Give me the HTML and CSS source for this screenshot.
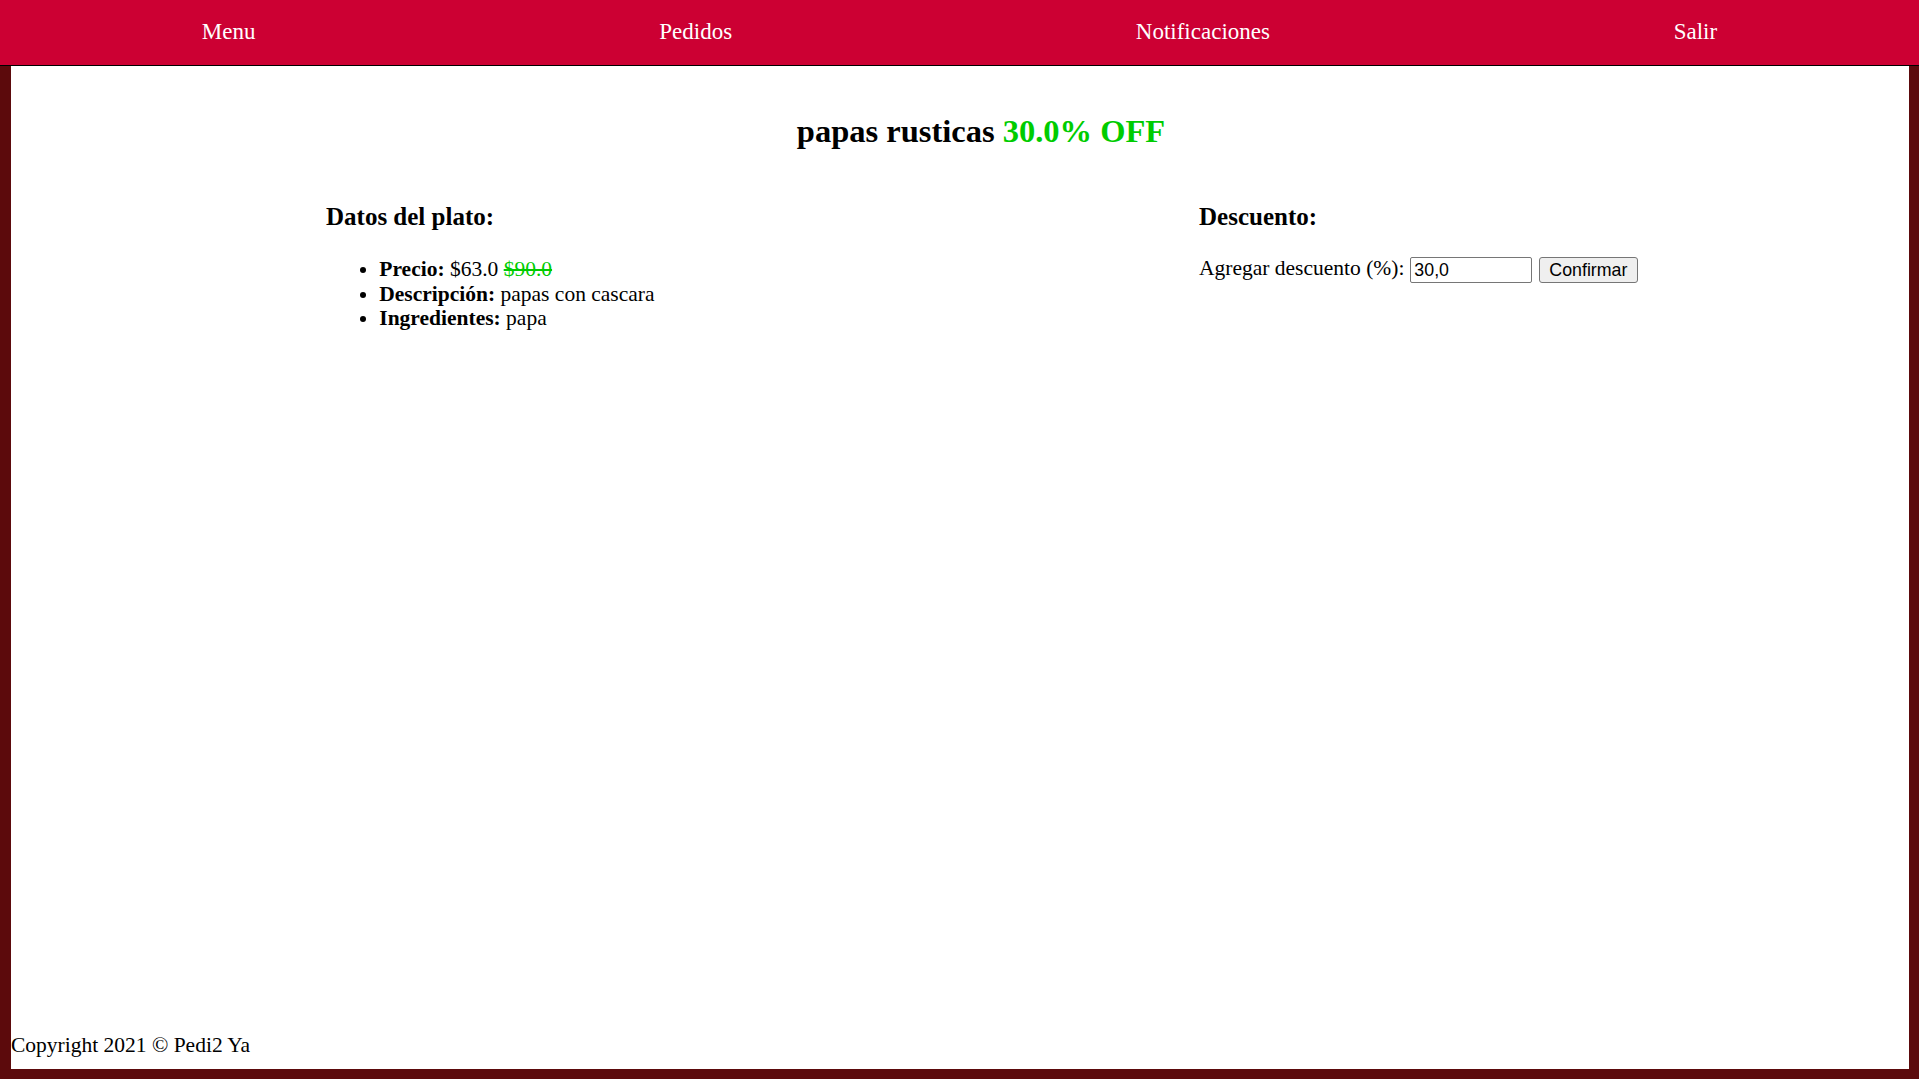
FILE: index.html
```html
<!DOCTYPE html>
<html lang="es">
<head>
<meta charset="utf-8">
<title>Pedi2 Ya</title>
<link rel="stylesheet" href="styles.css">
</head>
<body>
<nav class="navbar">
  <a class="nav-link" href="#">Menu</a>
  <a class="nav-link" href="#">Pedidos</a>
  <a class="nav-link" href="#">Notificaciones</a>
  <a class="nav-link" href="#">Salir</a>
</nav>
<main class="page">
  <section class="dish">
    <h2 class="dish-title">papas rusticas <span class="off">30.0% OFF</span></h2>
    <div class="columns">
      <div class="col">
        <h3 class="col-title">Datos del plato:</h3>
        <ul class="details">
          <li><b>Precio:</b> $63.0 <span class="old-price">$90.0</span></li>
          <li><b>Descripción:</b> papas con cascara</li>
          <li><b>Ingredientes:</b> papa</li>
        </ul>
      </div>
      <div class="col">
        <h3 class="col-title">Descuento:</h3>
        <form class="discount-row">
          <label class="discount-label" for="desc">Agregar descuento (%):</label>
          <input class="discount-input" id="desc" type="text" value="30,0">
          <button class="discount-btn" type="button">Confirmar</button>
        </form>
      </div>
    </div>
  </section>
  <footer class="footer">Copyright 2021 © Pedi2 Ya</footer>
</main>
</body>
</html>
```

FILE: styles.css
```css
html, body {
  margin: 0;
  padding: 0;
}

body {
  min-height: 100vh;
  display: flex;
  flex-direction: column;
  background: #5c0a0c;
  font-family: "Liberation Serif", "Times New Roman", serif;
  font-size: 21.5px;
  line-height: 24.5px;
  color: #000;
}

.navbar {
  box-sizing: border-box;
  height: 66px;
  padding-top: 18.5px;
  background: #cc0033;
  border-bottom: 1px solid #000;
  display: flex;
  justify-content: space-around;
  align-items: flex-start;
}

.nav-link {
  color: #fff;
  text-decoration: none;
  font-size: 23px;
  line-height: normal;
}

.page {
  flex: 1;
  display: flex;
  flex-direction: column;
  background: #fff;
  margin: 0 10px 10px 11px;
}

.dish {
  width: 1310px;
  margin-left: 315px;
}

.dish-title {
  font-size: 32.5px;
  font-weight: bold;
  text-align: center;
  margin: 47px 0 0;
  line-height: 36.8px;
}

.off {
  color: #00cc00;
}

.columns {
  display: grid;
  grid-template-columns: 873px 1fr;
}

.col-title {
  font-size: 25px;
  font-weight: bold;
  margin: 53px 0 25.5px;
  line-height: 28.7px;
}

.details {
  margin: 0;
  padding-left: 53.3px;
}

.old-price {
  color: #00cc00;
  text-decoration: line-through;
}

.discount-row {
  display: flex;
  align-items: flex-start;
  margin: 0;
  white-space: nowrap;
}

.discount-label {
  flex-shrink: 0;
  white-space: nowrap;
  margin-top: -1px;
  margin-right: 6px;
}

.discount-input {
  flex-shrink: 0;
  box-sizing: border-box;
  width: 122px;
  height: 26px;
  margin: 0;
  padding: 1px 3px;
  border: 1px solid #767676;
  border-radius: 2px;
  font-family: "Liberation Sans", Arial, sans-serif;
  font-size: 17.8px;
  color: #000;
  background: #fff;
}

.discount-btn {
  flex-shrink: 0;
  box-sizing: border-box;
  width: 99px;
  height: 26px;
  margin: 0 0 0 6.5px;
  padding: 0 6px;
  border: 1px solid #767676;
  border-radius: 3px;
  background: #efefef;
  font-family: "Liberation Sans", Arial, sans-serif;
  font-size: 17.8px;
  color: #000;
}

.footer {
  margin-top: auto;
  margin-bottom: 12px;
}
```
